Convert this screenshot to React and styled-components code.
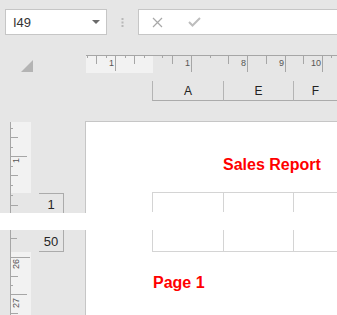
import React from "react";
import styled, { createGlobalStyle } from "styled-components";

const GlobalStyle = createGlobalStyle`
	body {
		margin: 0;
		background: #e6e6e6;
		overflow: hidden;
	}
`;

const Frame = styled.div`
	width: 337px;
	height: 315px;
	overflow: hidden;
	background: #e6e6e6;
	font-family: "Liberation Sans", Arial, sans-serif;
	color: #262626;
`;

const TopBar = styled.div`
	display: flex;
	align-items: flex-start;
	height: 35px;
	padding: 9px 0 0 5px;
	box-sizing: border-box;
`;

const NameBox = styled.div`
	width: 102px;
	height: 26px;
	box-sizing: border-box;
	border: 1px solid #c6c6c6;
	background: #fff;
	display: flex;
	align-items: center;
	justify-content: space-between;
	padding: 0 6px 0 7px;
	font-size: 13px;
	color: #333;
`;

const Grip = styled.div`
	width: 31px;
	height: 26px;
	display: flex;
	align-items: center;
	justify-content: center;
`;

const FormulaBox = styled.div`
	flex: 1;
	height: 26px;
	box-sizing: border-box;
	border: 1px solid #c6c6c6;
	border-right: none;
	background: #fff;
	display: flex;
	align-items: center;
	padding-left: 13px;
	gap: 25px;
`;

const RulerRow = styled.div`
	display: flex;
	margin-top: 20px;
	height: 18px;
`;

const Corner = styled.div`
	width: 86px;
	display: flex;
	align-items: flex-end;
	padding: 0 0 1px 21px;
	box-sizing: border-box;
`;

const HeaderRow = styled.div`
	display: flex;
	margin-top: 8px;
	padding-left: 152px;
`;

const HeaderCell = styled.div`
	width: ${p => (p.$w ? `${p.$w}px` : "auto")};
	flex: ${p => (p.$w ? "none" : 1)};
	height: 19px;
	border-left: 1px solid #b4b4b4;
	border-bottom: 1px solid #ababab;
	display: flex;
	align-items: center;
	justify-content: center;
	font-size: 12px;
	color: #222;
`;

const Section = styled.div`
	display: flex;
	height: ${p => p.$h}px;
	margin-top: ${p => p.$gap || 0}px;
`;

const Gutter = styled.div`
	width: 85px;
	display: flex;
	padding-left: 10px;
	box-sizing: border-box;
`;

const RowHead = styled.div`
	width: 25px;
	height: ${p => p.$h}px;
	margin-left: 8px;
	align-self: ${p => (p.$edge === "top" ? "flex-end" : "flex-start")};
	border-right: 1px solid #ababab;
	border-${p => p.$edge}: 1px solid #ababab;
	display: flex;
	align-items: center;
	justify-content: center;
	font-size: 13px;
	color: #262626;
	padding-top: 1px;
	box-sizing: border-box;
`;

const PageArea = styled.div`
	flex: 1;
	background: #fff;
	border-left: 1px solid #c6c6c6;
	border-top: ${p => (p.$top ? "1px solid #c6c6c6" : "none")};
	display: flex;
	flex-direction: column;
`;

const Title = styled.div`
	margin-top: ${p => p.$mt}px;
	padding-left: ${p => p.$pl}px;
	font-size: 16px;
	line-height: 19px;
	font-weight: bold;
	color: #ff0000;
`;

const GridRow = styled.div`
	display: flex;
	margin-left: 66px;
	margin-top: ${p => p.$mt || 0}px;
	height: ${p => p.$h}px;
	box-sizing: border-box;
	border-${p => p.$edge}: 1px solid #d4d4d4;
`;

const Cell = styled.div`
	width: ${p => (p.$w ? `${p.$w}px` : "auto")};
	flex: ${p => (p.$w ? "none" : 1)};
	border-left: 1px solid #d4d4d4;
`;

const Band = styled.div`
	height: 17px;
	background: #fff;
`;

const hTicks = [
	[1, 2], [10, 8], [20, 2], [29, 15], [39, 2], [48, 8], [58, 2],
	[76, 2], [86, 8], [105, 16], [124, 2], [142, 8], [161, 16],
	[180, 8], [199, 16], [217, 8], [236, 16], [245, 2],
];
const hLabels = [["1", 28], ["1", 104], ["8", 160], ["9", 198], ["10", 235]];

const HRuler = () => (
	<svg width="251" height="18">
		<rect x="0" y="1" width="67" height="17" fill="#f2f2f2" />
		<line x1="0" y1="0.5" x2="251" y2="0.5" stroke="#a6a6a6" />
		{hTicks.map(([x, l]) => (
			<line key={x} x1={x + 0.5} y1="1" x2={x + 0.5} y2={1 + l} stroke="#a6a6a6" />
		))}
		{hLabels.map(([t, x], i) => (
			<text key={i} x={x} y="11" textAnchor="end" fontSize="9" fill="#555" fontFamily="Liberation Sans, sans-serif">
				{t}
			</text>
		))}
	</svg>
);

const VRuler = ({ h, light, ticks, labels }) => (
	<svg width="21" height={h}>
		<rect x="1" y={light[0]} width="20" height={light[1]} fill="#f2f2f2" />
		<line x1="0.5" y1={light[0] > 1 ? 0 : 1} x2="0.5" y2={h} stroke="#a6a6a6" />
		{ticks.map(([y, l]) => (
			<line key={y} x1="1" y1={y + 0.5} x2={1 + l} y2={y + 0.5} stroke="#a6a6a6" />
		))}
		{labels.map(([t, y]) => (
			<text key={t} transform={`translate(9 ${y}) rotate(-90)`} fontSize="9" fill="#555" fontFamily="Liberation Sans, sans-serif">
				{t}
			</text>
		))}
	</svg>
);

const App = () => (
	<Frame>
		<GlobalStyle />
		<TopBar>
			<NameBox>
				I49
				<svg width="8" height="5">
					<polygon points="0,0 8,0 4,4" fill="#6a6a6a" />
				</svg>
			</NameBox>
			<Grip>
				<svg width="3" height="9">
					<rect x="0.5" y="0" width="2" height="2" fill="#b8b8b8" />
					<rect x="0.5" y="3.5" width="2" height="2" fill="#b8b8b8" />
					<rect x="0.5" y="7" width="2" height="2" fill="#b8b8b8" />
				</svg>
			</Grip>
			<FormulaBox>
				<svg width="11" height="11">
					<path d="M1 1 L10 10 M10 1 L1 10" stroke="#a8a8a8" strokeWidth="1.2" />
				</svg>
				<svg width="13" height="10">
					<path d="M1 5 L4.5 8.5 L12 1" stroke="#bdbdbd" strokeWidth="2" fill="none" />
				</svg>
			</FormulaBox>
		</TopBar>

		<RulerRow>
			<Corner>
				<svg width="12" height="12">
					<polygon points="12,0 12,12 0,12" fill="#b4b4b4" />
				</svg>
			</Corner>
			<HRuler />
		</RulerRow>

		<HeaderRow>
			<HeaderCell $w={70}>A</HeaderCell>
			<HeaderCell $w={69}>E</HeaderCell>
			<HeaderCell>F</HeaderCell>
		</HeaderRow>

		<Section $h={92} $gap={20}>
			<Gutter>
				<VRuler
					h={92}
					light={[1, 71]}
					ticks={[[7, 2], [16, 7], [26, 2], [35, 16], [45, 2], [54, 7], [64, 2], [74, 2], [84, 7]]}
					labels={[["1", 42]]}
				/>
				<RowHead $edge="top" $h={20}>1</RowHead>
			</Gutter>
			<PageArea $top>
				<Title $mt={33} $pl={137}>Sales Report</Title>
				<GridRow $edge="top" $h={20} $mt={18}>
					<Cell $w={70} />
					<Cell $w={69} />
					<Cell />
				</GridRow>
			</PageArea>
		</Section>

		<Band />

		<Section $h={85}>
			<Gutter>
				<VRuler
					h={85}
					light={[22, 63]}
					ticks={[[8, 6], [27, 19], [46, 7], [55, 2], [64, 16], [83, 7]]}
					labels={[["26", 39], ["27", 78]]}
				/>
				<RowHead $edge="bottom" $h={22}>50</RowHead>
			</Gutter>
			<PageArea>
				<GridRow $edge="bottom" $h={22}>
					<Cell $w={70} />
					<Cell $w={69} />
					<Cell />
				</GridRow>
				<Title $mt={21} $pl={67}>Page 1</Title>
			</PageArea>
		</Section>
	</Frame>
);

export default App;
